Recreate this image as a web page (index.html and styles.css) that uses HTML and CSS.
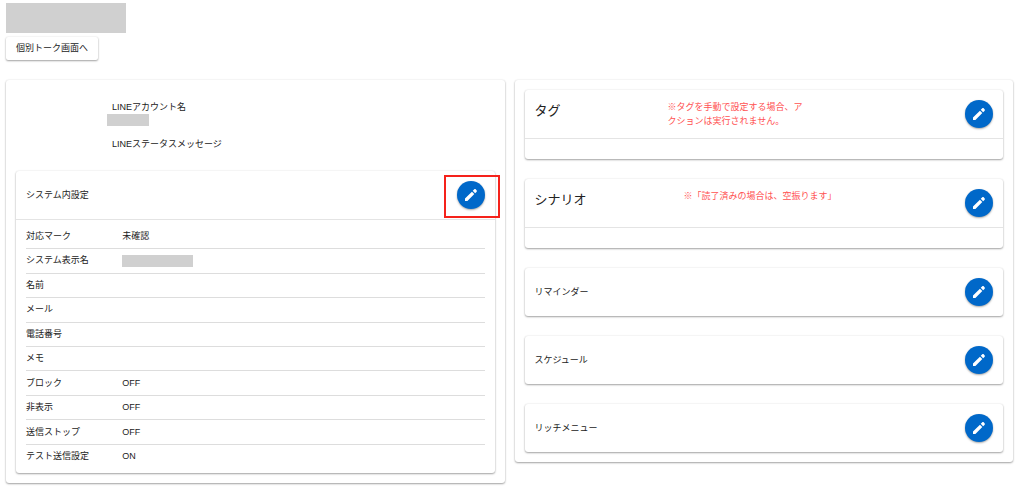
FILE: index.html
```html
<!DOCTYPE html>
<html lang="ja">
  <head>
    <meta charset="utf-8">
    <title>友だち詳細</title>
    <link rel="stylesheet" href="styles.css">
  </head>
  <body>
    <svg class="sprite" aria-hidden="true">
      <symbol id="pencil" viewBox="0 0 24 24">
        <path d="M3 17.4V21h3.6L17 10.6 13.4 7 3 17.4zM14.6 5.8l2-2c.8-.8 1.9-.9 2.7-.1l1 1c.8.8.7 1.9-.1 2.7l-2 2-3.6-3.6z" />
      </symbol>
    </svg>

    <header class="page-header">
      <div class="mask mask-title"></div>
      <button type="button" class="talk-button">個別トーク画面へ</button>
    </header>

    <main class="columns">
      <section class="card panel">
        <div class="profile">
          <p class="profile-label">LINEアカウント名</p>
          <div class="mask mask-account"></div>
          <p class="profile-label">LINEステータスメッセージ</p>
        </div>

        <div class="card">
          <div class="card-header">
            <h2 class="card-title">システム内設定</h2>
            <div class="edit-wrap">
              <button type="button" class="edit-button" aria-label="編集">
                <svg class="icon"><use href="#pencil" /></svg>
              </button>
              <span class="highlight"></span>
            </div>
          </div>
          <div class="settings">
            <table class="settings-table">
              <tbody>
                <tr><th scope="row">対応マーク</th><td>未確認</td></tr>
                <tr><th scope="row">システム表示名</th><td><div class="mask mask-name"></div></td></tr>
                <tr><th scope="row">名前</th><td></td></tr>
                <tr><th scope="row">メール</th><td></td></tr>
                <tr><th scope="row">電話番号</th><td></td></tr>
                <tr><th scope="row">メモ</th><td></td></tr>
                <tr><th scope="row">ブロック</th><td>OFF</td></tr>
                <tr><th scope="row">非表示</th><td>OFF</td></tr>
                <tr><th scope="row">送信ストップ</th><td>OFF</td></tr>
                <tr><th scope="row">テスト送信設定</th><td>ON</td></tr>
              </tbody>
            </table>
          </div>
        </div>
      </section>

      <section class="card panel side">
        <div class="card">
          <div class="card-header with-note">
            <h2 class="card-title large">タグ</h2>
            <p class="note">※タグを手動で設定する場合、アクションは実行されません。</p>
            <button type="button" class="edit-button" aria-label="タグを編集">
              <svg class="icon"><use href="#pencil" /></svg>
            </button>
          </div>
          <div class="card-body"></div>
        </div>

        <div class="card">
          <div class="card-header with-note">
            <h2 class="card-title large">シナリオ</h2>
            <p class="note note-line">※「読了済みの場合は、空振ります」</p>
            <button type="button" class="edit-button" aria-label="シナリオを編集">
              <svg class="icon"><use href="#pencil" /></svg>
            </button>
          </div>
          <div class="card-body"></div>
        </div>

        <div class="card">
          <div class="card-header">
            <h2 class="card-title">リマインダー</h2>
            <button type="button" class="edit-button" aria-label="リマインダーを編集">
              <svg class="icon"><use href="#pencil" /></svg>
            </button>
          </div>
        </div>

        <div class="card">
          <div class="card-header">
            <h2 class="card-title">スケジュール</h2>
            <button type="button" class="edit-button" aria-label="スケジュールを編集">
              <svg class="icon"><use href="#pencil" /></svg>
            </button>
          </div>
        </div>

        <div class="card">
          <div class="card-header">
            <h2 class="card-title">リッチメニュー</h2>
            <button type="button" class="edit-button" aria-label="リッチメニューを編集">
              <svg class="icon"><use href="#pencil" /></svg>
            </button>
          </div>
        </div>
      </section>
    </main>
  </body>
</html>
```

FILE: styles.css
```css
* {
  box-sizing: border-box;
}
body {
  margin: 0;
  padding: 3px 11px 10px 6px;
  background-color: #fff;
  color: #222;
  font-family: "Liberation Sans", "Noto Sans CJK JP", sans-serif;
  font-size: 9px;
  line-height: 13px;
}
h2,
p {
  margin: 0;
  font-weight: normal;
}
button {
  border: 0;
  color: inherit;
  font: inherit;
  cursor: pointer;
}
.sprite {
  display: none;
}
.mask {
  background-color: #d0d0d0;
}
.mask-title {
  width: 120px;
  height: 30px;
}
.mask-account {
  width: 42px;
  height: 12px;
}
.mask-name {
  width: 71px;
  height: 12px;
}
.page-header {
  margin-bottom: 20px;
}
.talk-button {
  display: block;
  margin-top: 4px;
  padding: 5px 10px;
  border-radius: 2px;
  background-color: #fff;
  box-shadow: 0 1px 2px rgba(0, 0, 0, 0.35), 0 0 2px rgba(0, 0, 0, 0.1);
}
.columns {
  display: grid;
  grid-template-columns: 1fr 1fr;
  align-items: start;
  gap: 10px;
}
.card {
  border-radius: 3px;
  background-color: #fff;
  box-shadow: 0 1px 2px rgba(0, 0, 0, 0.35), 0 0 2px rgba(0, 0, 0, 0.1);
}
.panel {
  padding: 10px;
}
.side {
  display: flex;
  flex-direction: column;
  gap: 20px;
}
.profile {
  padding: 11px 0 20px 91px;
}
.profile-label {
  padding-left: 5px;
}
.mask-account + .profile-label {
  margin-top: 12px;
}
.card-header {
  display: flex;
  align-items: center;
  justify-content: space-between;
  padding: 10px;
}
.card-title {
  font-size: 9px;
}
.card-title.large {
  font-size: 13px;
  line-height: 22px;
}
.with-note {
  display: grid;
  grid-template-columns: 29% 1fr 28px;
  align-items: start;
}
.note {
  max-width: 136px;
  line-height: 14px;
  color: #ff5252;
}
.note-line {
  max-width: none;
  margin-left: 16px;
}
.card-body {
  height: 21px;
  border-top: 1px solid #e4e4e4;
}
.edit-wrap {
  position: relative;
}
.edit-button {
  display: flex;
  align-items: center;
  justify-content: center;
  width: 28px;
  height: 28px;
  padding: 0;
  border-radius: 50%;
  background-color: #0068c9;
  box-shadow: 0 1px 2px rgba(0, 0, 0, 0.35);
}
.icon {
  width: 16px;
  height: 16px;
  fill: #fff;
}
.highlight {
  position: absolute;
  inset: -6px -15px -9px -13px;
  border: 2px solid #f5221b;
  pointer-events: none;
}
.settings {
  padding: 5px 10px;
  border-top: 1px solid #e4e4e4;
}
.settings-table {
  width: 100%;
  height: 243px;
  border-collapse: collapse;
}
.settings-table th,
.settings-table td {
  padding: 0;
  border-bottom: 1px solid #ddd;
  font-weight: normal;
  text-align: left;
}
.settings-table th {
  width: 21%;
}
.settings-table tr:last-child th,
.settings-table tr:last-child td {
  border-bottom: 0;
}
```
